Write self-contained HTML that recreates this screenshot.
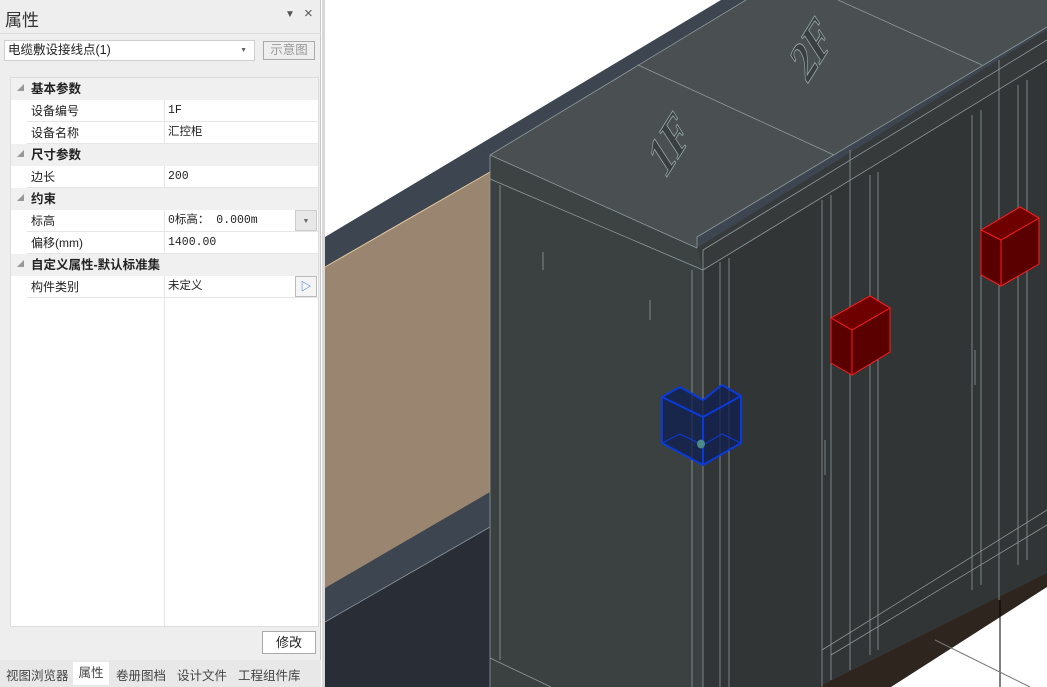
<!DOCTYPE html>
<html><head><meta charset="utf-8"><style>
*{margin:0;padding:0;box-sizing:border-box}
body{width:1047px;height:687px;overflow:hidden;background:#fff;font-family:"Liberation Sans","Noto Sans CJK SC",sans-serif;font-size:12px;color:#222;position:relative}
#panel{position:absolute;left:0;top:0;width:321px;height:687px;background:#eeeeee;border-right:1px solid #c8c8c8}
.abs{position:absolute}
.row{position:absolute;left:27px;width:291px;height:22px;line-height:22px;border-bottom:1px solid #e6e6e6;background:#fff}
.hdr{position:absolute;left:11px;width:307px;height:22px;line-height:22px;background:#f0f0f0;font-weight:bold;padding-left:20px;font-size:12.5px}
.hdr:before{content:"◢";position:absolute;left:6px;font-size:7px;color:#999;font-weight:normal}
.lab{position:absolute;left:4px}
.val{position:absolute;left:141px;font-family:"Liberation Mono","Noto Sans CJK SC",monospace;font-size:11.5px}
.div{position:absolute;left:137px;top:0;height:22px;border-left:1px solid #e6e6e6}
</style></head><body>
<div id="panel">
 <div class="abs" style="left:5px;top:6px;font-size:17px;color:#333">属性</div>
 <div class="abs" style="left:285px;top:9px;font-size:10px;color:#555">▼</div>
 <div class="abs" style="left:304px;top:5px;font-size:15px;color:#555">×</div>
 <div class="abs" style="left:0;top:33px;width:321px;height:1px;background:#ddd"></div>
 <div class="abs" style="left:4px;top:40px;width:251px;height:21px;background:#fff;border:1px solid #cfcfcf;line-height:19px;padding-left:3px;font-size:12.5px">电缆敷设接线点(1)<span style="position:absolute;right:7px;font-size:7px;color:#666">▼</span></div>
 <div class="abs" style="left:263px;top:41px;width:52px;height:19px;border:1px solid #aaa;color:#999;text-align:center;line-height:17px;font-size:12.5px">示意图</div>
 <div class="abs" style="left:10px;top:77px;width:309px;height:550px;background:#fff;border:1px solid #ddd"></div>
 <div class="abs" style="left:164px;top:100px;height:526px;border-left:1px solid #e6e6e6"></div>
 <div class="hdr" style="top:78px">基本参数</div>
 <div class="row" style="top:100px"><span class="lab">设备编号</span><div class="div"></div><span class="val">1F</span></div>
 <div class="row" style="top:122px"><span class="lab">设备名称</span><div class="div"></div><span class="val">汇控柜</span></div>
 <div class="hdr" style="top:144px">尺寸参数</div>
 <div class="row" style="top:166px"><span class="lab">边长</span><div class="div"></div><span class="val">200</span></div>
 <div class="hdr" style="top:188px">约束</div>
 <div class="row" style="top:210px"><span class="lab">标高</span><div class="div"></div><span class="val">0标高： 0.000m</span><div class="abs" style="left:268px;top:0;width:22px;height:21px;background:#e8e8e8;border:1px solid #ccc;text-align:center;font-size:7px;color:#666">▼</div></div>
 <div class="row" style="top:232px"><span class="lab">偏移(mm)</span><div class="div"></div><span class="val">1400.00</span></div>
 <div class="hdr" style="top:254px">自定义属性-默认标准集</div>
 <div class="row" style="top:276px"><span class="lab">构件类别</span><div class="div"></div><span class="val">未定义</span><div class="abs" style="left:268px;top:0;width:22px;height:21px;background:#f4f4f4;border:1px solid #bbb;text-align:center;color:#2a6fd0;font-size:11px;line-height:20px">▷</div></div>
 <div class="abs" style="left:262px;top:631px;width:54px;height:23px;background:#fff;border:1px solid #aaa;text-align:center;line-height:21px;font-size:13px">修改</div>
 <div class="abs" style="left:0;top:660px;width:321px;height:27px;background:#e8e8e8;font-size:12.5px;color:#444">
  <span class="abs" style="left:6px;top:5px">视图浏览器</span>
  <span class="abs" style="left:73px;top:2px;width:36px;height:23px;background:#fff;text-align:center;line-height:22px">属性</span>
  <span class="abs" style="left:116px;top:5px">卷册图档</span>
  <span class="abs" style="left:177px;top:5px">设计文件</span>
  <span class="abs" style="left:238px;top:5px">工程组件库</span>
 </div>
</div>
<svg class="abs" style="left:0;top:0" width="1047" height="687" viewBox="0 0 1047 687">
 <rect x="322" y="0" width="3" height="687" fill="#d8d8d8"/>
 <polygon points="325,237 721,0 1047,0 1047,687 325,687" fill="#3c4550"/>
 <polygon points="325,267 490,172 490,492 325,588" fill="#9a8670"/>
 <line x1="325" y1="267" x2="490" y2="172" stroke="#e8c9a0" stroke-width="1"/>
 <polygon points="325,622 490,527 490,687 325,687" fill="#292d35"/>
 <line x1="325" y1="622" x2="490" y2="527" stroke="#8a949a" stroke-width="0.8"/>
 <polygon points="818,687 1047,573 1047,687" fill="#2e261e"/>
 <polygon points="891,687 1047,587 1047,687" fill="#fff"/>
 <line x1="1000" y1="600" x2="1000" y2="687" stroke="#000"/>
 <line x1="935" y1="640" x2="1030" y2="687" stroke="#777"/>
 <polygon points="490,179 703,270 703,687 490,687" fill="#3b4141"/>
 <polygon points="703,270 1047,60 1047,573 818,687 703,687" fill="#323536"/>
 <polygon points="490,155 697,248 703,270 490,179" fill="#3d4343"/>
 <polygon points="697,248 1047,30 1047,60 703,270" fill="#363a3b"/>
 <polygon points="490,155 746,0 1047,0 1047,27 697,237 697,248" fill="#4a4f52"/>
 <g stroke="#8e9a9a" stroke-width="0.8" fill="none">
  <polyline points="490,155 697,248 697,237 1047,27"/>
  <line x1="490" y1="155" x2="746" y2="0"/>
  <line x1="638" y1="65" x2="834" y2="155"/>
  <line x1="838" y1="0" x2="982" y2="65"/>
  <line x1="490" y1="155" x2="490" y2="687"/>
  <line x1="490" y1="179" x2="703" y2="270"/>
  <line x1="703" y1="250" x2="703" y2="687"/>
  <line x1="703" y1="270" x2="1047" y2="60"/>
  <line x1="703" y1="250" x2="1047" y2="40"/>
  <line x1="500" y1="185" x2="500" y2="660"/>
  <line x1="490" y1="658" x2="551" y2="687"/>
  <line x1="692" y1="270" x2="692" y2="687"/>
  <line x1="720" y1="262" x2="720" y2="687"/>
  <line x1="729" y1="258" x2="729" y2="687"/>
  <line x1="822" y1="200" x2="822" y2="687"/>
  <line x1="831" y1="195" x2="831" y2="680"/>
  <line x1="850" y1="150" x2="850" y2="670"/>
  <line x1="870" y1="175" x2="870" y2="655"/>
  <line x1="878" y1="172" x2="878" y2="650"/>
  <line x1="972" y1="115" x2="972" y2="590"/>
  <line x1="981" y1="110" x2="981" y2="585"/>
  <line x1="999" y1="60" x2="999" y2="600"/>
  <line x1="1018" y1="85" x2="1018" y2="565"/>
  <line x1="1027" y1="80" x2="1027" y2="560"/>
  <line x1="822" y1="650" x2="1047" y2="510"/>
  <line x1="831" y1="655" x2="1047" y2="525"/>
  <line x1="543" y1="252" x2="543" y2="270"/>
  <line x1="650" y1="300" x2="650" y2="320"/>
  <line x1="825" y1="440" x2="825" y2="475"/>
  <line x1="975" y1="350" x2="975" y2="385"/>
 </g>
 <g transform="translate(668,145) rotate(-58) skewX(-25)" fill="#3a3e40" stroke="#9aa" stroke-width="0.8" font-family="Liberation Serif" font-size="46" font-weight="bold"><text x="-24" y="16">1F</text></g>
 <g transform="translate(810,50) rotate(-58) skewX(-25)" fill="#3a3e40" stroke="#9aa" stroke-width="0.8" font-family="Liberation Serif" font-size="46" font-weight="bold"><text x="-24" y="16">2F</text></g>
 <g stroke="#ff1a1a" stroke-width="1">
  <polygon points="831,318 870,296 890,308 890,352 852,375 831,363" fill="#5a0000"/>
  <polygon points="831,318 870,296 890,308 852,330" fill="#6e0000"/>
  <line x1="852" y1="330" x2="852" y2="375"/>
  <polygon points="981,230 1020,207 1039,218 1039,264 1001,286 981,275" fill="#5a0000"/>
  <polygon points="981,230 1020,207 1039,218 1001,240" fill="#6e0000"/>
  <line x1="1001" y1="240" x2="1001" y2="286"/>
 </g>
 <g stroke="#0a3ad8" stroke-width="2" fill="rgba(15,30,80,0.75)">
  <polygon points="662,397 680,387 703,400 722,385 741,396 741,443 703,465 662,443"/>
  <polyline points="662,397 703,417 741,396" fill="none"/>
  <line x1="703" y1="417" x2="703" y2="465"/>
  <polyline points="662,443 680,434 703,445 722,434 741,443" fill="none" stroke-width="1"/>
 </g>
 <ellipse cx="701" cy="444" rx="4" ry="4.5" fill="#4a8a8a"/>
</svg>
</body></html>
